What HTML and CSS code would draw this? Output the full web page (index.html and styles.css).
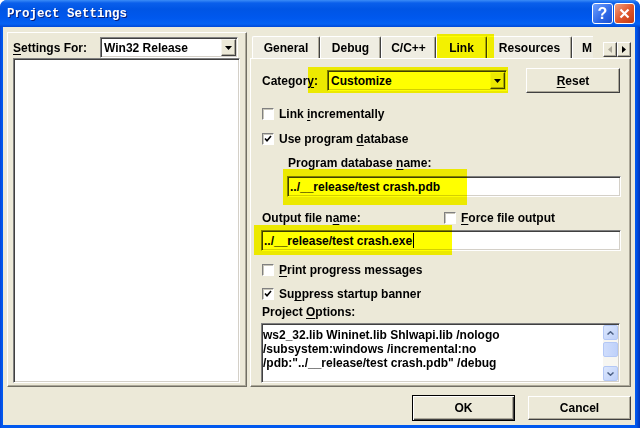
FILE: index.html
```html
<!DOCTYPE html>
<html lang="en">
<head>
    <meta charset="UTF-8">
    <title>Project Settings</title>
    <link rel="stylesheet" href="styles.css">
</head>
<body>

<div class="window">
    <div class="titlebar">
        <span class="title">Project Settings</span>
        <div class="caption-buttons">
            <span class="cap-btn help">?</span>
            <span class="cap-btn close">
                <svg width="11" height="11" viewBox="0 0 11 11"><path d="M1.5 1.5 L9.5 9.5 M9.5 1.5 L1.5 9.5" stroke="#fff" stroke-width="2.2"/></svg>
            </span>
        </div>
    </div>

    <div class="client">
        <div class="main">
            <!-- left pane: target tree -->
            <div class="left-pane">
                <div class="settings-for">
                    <span class="settings-label"><u>S</u>ettings For:</span>
                    <div class="combo target-combo">
                        <span class="combo-text">Win32 Release</span>
                        <span class="drop-btn"><svg width="7" height="4" viewBox="0 0 7 4"><polygon points="0,0 7,0 3.5,4" fill="#000"/></svg></span>
                    </div>
                </div>
                <div class="tree"></div>
            </div>

            <!-- right pane: tabs -->
            <div class="right-pane">
                <div class="tab-strip">
                    <div class="tabs">
                        <span class="tab tab-general">General</span>
                        <span class="tab tab-debug">Debug</span>
                        <span class="tab tab-cpp">C/C++</span>
                        <span class="tab tab-link active marked">Link</span>
                        <span class="tab tab-res">Resources</span>
                        <span class="tab tab-more">M</span>
                    </div>
                    <div class="tab-scroll">
                        <span class="scroll-btn"><svg width="4" height="7" viewBox="0 0 4 7"><polygon points="4,0 4,7 0,3.5" fill="#ACA899"/></svg></span>
                        <span class="scroll-btn"><svg width="4" height="7" viewBox="0 0 4 7"><polygon points="0,0 0,7 4,3.5" fill="#000"/></svg></span>
                    </div>
                </div>

                <div class="tab-page">
                    <div class="cat-row">
                        <span class="cat-label">Categor<u>y</u>:</span>
                        <div class="combo cat-combo marked">
                            <span class="combo-text">Customize</span>
                            <span class="drop-btn"><svg width="7" height="4" viewBox="0 0 7 4"><polygon points="0,0 7,0 3.5,4" fill="#000"/></svg></span>
                        </div>
                        <span class="btn reset-btn"><span><u>R</u>eset</span></span>
                    </div>

                    <div class="check-row row-incremental">
                        <span class="checkbox"></span>
                        <span>Link <u>i</u>ncrementally</span>
                    </div>
                    <div class="check-row row-pdb-use">
                        <span class="checkbox checked"><svg width="8" height="8" viewBox="0 0 8 8"><polyline points="1,3.5 3,5.8 7,1" fill="none" stroke="#000" stroke-width="1.6"/></svg></span>
                        <span>Use program <u>d</u>atabase</span>
                    </div>

                    <div class="field-label pdb-label">Program database <u>n</u>ame:</div>
                    <div class="edit pdb-field marked">../__release/test crash.pdb</div>

                    <div class="output-row">
                        <span class="output-label">Output file n<u>a</u>me:</span>
                        <span class="checkbox"></span>
                        <span><u>F</u>orce file output</span>
                    </div>
                    <div class="edit exe-field marked">../__release/test crash.exe<span class="caret"></span></div>

                    <div class="check-row row-print">
                        <span class="checkbox"></span>
                        <span><u>P</u>rint progress messages</span>
                    </div>
                    <div class="check-row row-suppress">
                        <span class="checkbox checked"><svg width="8" height="8" viewBox="0 0 8 8"><polyline points="1,3.5 3,5.8 7,1" fill="none" stroke="#000" stroke-width="1.6"/></svg></span>
                        <span>Su<u>p</u>press startup banner</span>
                    </div>

                    <div class="field-label options-label">Project <u>O</u>ptions:</div>
                    <div class="options-box">
                        <div class="options-text">ws2_32.lib Wininet.lib Shlwapi.lib /nologo
/subsystem:windows /incremental:no
/pdb:"../__release/test crash.pdb" /debug</div>
                        <div class="scrollbar">
                            <span class="sb-btn"><svg width="7" height="4" viewBox="0 0 7 4"><polyline points="0.5,3.5 3.5,0.8 6.5,3.5" fill="none" stroke="#4D6185" stroke-width="1.5"/></svg></span>
                            <span class="sb-thumb"></span>
                            <span class="sb-btn sb-down"><svg width="7" height="4" viewBox="0 0 7 4"><polyline points="0.5,0.5 3.5,3.2 6.5,0.5" fill="none" stroke="#4D6185" stroke-width="1.5"/></svg></span>
                        </div>
                    </div>
                </div>
            </div>
        </div>

        <div class="dialog-buttons">
            <span class="btn default">OK</span>
            <span class="btn cancel-btn">Cancel</span>
        </div>
    </div>
</div>

</body>
</html>
```

FILE: styles.css
```css
body {
    margin: 0;
    font-family: "Liberation Sans", Arial, sans-serif;
    font-weight: bold;
    font-size: 12px;
    color: #000;
    background: #fff;
}
u {
    text-decoration-thickness: 1px;
    text-underline-offset: 2px;
}

/* window frame */
.window {
    width: 640px;
    height: 428px;
    display: flex;
    flex-direction: column;
    background: linear-gradient(to right, #0842D6, #0058EE 2px, #0058EE 636px, #0034B8);
    border-radius: 7px 7px 0 0;
    overflow: hidden;
}
.titlebar {
    height: 27px;
    flex: none;
    display: flex;
    align-items: center;
    justify-content: space-between;
    padding: 0 5px 0 7px;
    background: linear-gradient(to bottom, #3B8CF7 0, #0A5FEB 3px, #0055E5 9px, #0058EE 18px, #0462F3 24px, #0048D6 27px);
}
.title {
    font-family: "Liberation Mono", monospace;
    font-size: 12.5px;
    color: #fff;
    text-shadow: 1px 1px #0A1E78;
}
.caption-buttons {
    display: flex;
    gap: 1px;
}
.cap-btn {
    width: 21px;
    height: 21px;
    box-sizing: border-box;
    border: 1px solid #fff;
    border-radius: 3px;
    display: flex;
    align-items: center;
    justify-content: center;
    color: #fff;
    font-family: "Liberation Sans", Arial, sans-serif;
    font-size: 16px;
}
.help {
    background: linear-gradient(135deg, #6FA0FF, #2E68E6 60%, #1B50D0);
}
.close {
    background: linear-gradient(135deg, #F0A080, #E0582E 50%, #C23A14);
}

.client {
    flex: 1;
    margin: 0 5px 3px 3px;
    background: #ECE9D8;
    display: flex;
    flex-direction: column;
}
.main {
    display: flex;
    gap: 3px;
    padding: 5px 4px 0 4px;
}

/* shared controls */
.combo {
    box-sizing: border-box;
    height: 21px;
    display: flex;
    align-items: center;
    background: #fff;
    border: 1px solid;
    border-color: #808080 #fff #fff #808080;
    box-shadow: inset 1px 1px #404040, inset -1px -1px #D4D0C8;
    padding: 1px;
}
.combo-text {
    flex: 1;
    padding-left: 2px;
}
.drop-btn {
    width: 15px;
    height: 17px;
    box-sizing: border-box;
    display: flex;
    align-items: center;
    justify-content: center;
    background: #ECE9D8;
    border: 1px solid;
    border-color: #F5F4EE #404040 #404040 #F5F4EE;
    box-shadow: inset -1px -1px #ACA899;
}
.btn {
    box-sizing: border-box;
    display: flex;
    align-items: center;
    justify-content: center;
    background: #ECE9D8;
    border: 1px solid;
    border-color: #fff #404040 #404040 #fff;
    box-shadow: inset -1px -1px #ACA899;
}
.edit {
    box-sizing: border-box;
    height: 21px;
    display: flex;
    align-items: center;
    background: #fff;
    border: 1px solid;
    border-color: #808080 #fff #fff #808080;
    box-shadow: inset 1px 1px #404040, inset -1px -1px #D4D0C8;
    padding-left: 2px;
    white-space: pre;
}
.checkbox {
    width: 12px;
    height: 12px;
    box-sizing: border-box;
    flex: none;
    margin-right: 5px;
    background: #fff;
    border: 1px solid;
    border-color: #808080 #fff #fff #808080;
    box-shadow: inset 1px 1px #C8C6BA;
    display: flex;
    align-items: center;
    justify-content: center;
}

/* yellow marker annotations */
.marked {
    position: relative;
}
.marked::after {
    content: "";
    position: absolute;
    background: #FFFF00;
    mix-blend-mode: multiply;
    pointer-events: none;
}

/* left pane */
.left-pane {
    box-sizing: border-box;
    width: 240px;
    height: 355px;
    display: flex;
    flex-direction: column;
    border: 1px solid;
    border-color: #fff #716F64 #716F64 #fff;
    box-shadow: inset -1px -1px #ACA899;
    padding: 4px 8px 3px 5px;
}
.settings-for {
    display: flex;
    align-items: center;
    justify-content: space-between;
}
.target-combo {
    width: 138px;
}
.tree {
    flex: 1;
    margin-right: -2px;
    background: #fff;
    border: 1px solid;
    border-color: #808080 #fff #fff #808080;
    box-shadow: inset 1px 1px #404040, inset -1px -1px #D4D0C8;
}

/* right pane */
.right-pane {
    width: 381px;
    display: flex;
    flex-direction: column;
}
.tab-strip {
    height: 26px;
    display: flex;
    align-items: flex-end;
    padding-left: 2px;
}
.tabs {
    width: 341px;
    height: 26px;
    display: flex;
    align-items: flex-end;
    overflow: hidden;
}
.tab {
    box-sizing: border-box;
    flex: none;
    height: 22px;
    display: flex;
    align-items: center;
    justify-content: center;
    background: #EFEDE2;
    border-top: 1px solid #fff;
    border-left: 1px solid #fff;
    border-right: 1px solid #404040;
    box-shadow: inset -1px 0 #ACA899;
    border-radius: 2px 2px 0 0;
}
.tab-general { width: 68px; }
.tab-debug { width: 61px; }
.tab-cpp { width: 55px; }
.tab-link { width: 51px; }
.tab-res { width: 85px; }
.tab-more { width: 40px; justify-content: flex-start; padding-left: 9px; }
.tab.active {
    background: #F3F1E8;
}
.tab.active::after {
    left: 0;
    right: -8px;
    top: -3px;
    bottom: 0;
}
.tab-scroll {
    display: flex;
    margin: 0 0 1px 10px;
}
.scroll-btn {
    width: 14px;
    height: 15px;
    box-sizing: border-box;
    display: flex;
    align-items: center;
    justify-content: center;
    background: #ECE9D8;
    border: 1px solid;
    border-color: #fff #404040 #404040 #fff;
    box-shadow: inset -1px -1px #ACA899;
}

.tab-page {
    box-sizing: border-box;
    height: 329px;
    display: flex;
    flex-direction: column;
    border: 1px solid;
    border-color: #fff #716F64 #716F64 #fff;
    box-shadow: inset -1px -1px #ACA899;
    padding: 9px 9px 0 11px;
}
.cat-row {
    height: 25px;
    display: flex;
    align-items: center;
}
.cat-label {
    flex: 0 0 65px;
}
.cat-combo {
    width: 180px;
}
.cat-combo::after {
    left: -20px;
    right: -2px;
    top: -4px;
    bottom: -3px;
}
.reset-btn {
    width: 94px;
    height: 25px;
    margin-left: 19px;
}
.check-row,
.output-row {
    height: 14px;
    line-height: 14px;
    display: flex;
    align-items: center;
}
.field-label {
    height: 14px;
    line-height: 14px;
}
.row-incremental { margin-top: 14px; }
.row-pdb-use { margin-top: 11px; }
.pdb-label { margin: 10px 0 0 26px; }
.pdb-field {
    margin: 6px 0 0 25px;
}
.pdb-field::after {
    left: -5px;
    top: -8px;
    width: 184px;
    height: 36px;
}
.output-row { margin-top: 14px; }
.output-label {
    flex: 0 0 182px;
}
.exe-field {
    margin: 5px 0 0 -1px;
}
.exe-field::after {
    left: -8px;
    top: -6px;
    width: 198px;
    height: 30px;
}
.caret {
    width: 1px;
    height: 15px;
    background: #000;
    margin-left: 1px;
}
.row-print { margin-top: 12px; }
.row-suppress { margin-top: 10px; }
.options-label { margin-top: 4px; }
.options-box {
    box-sizing: border-box;
    height: 60px;
    margin: 4px 1px 0 -1px;
    display: flex;
    background: #fff;
    border: 1px solid;
    border-color: #808080 #fff #fff #808080;
    box-shadow: inset 1px 1px #404040, inset -1px -1px #D4D0C8;
    padding: 1px;
}
.options-text {
    flex: 1;
    padding-top: 3px;
    line-height: 14px;
    white-space: pre;
    overflow: hidden;
}
.scrollbar {
    width: 15px;
    display: flex;
    flex-direction: column;
    gap: 2px;
    background: #F7F6F1;
}
.sb-btn,
.sb-thumb {
    width: 15px;
    height: 15px;
    box-sizing: border-box;
    display: flex;
    align-items: center;
    justify-content: center;
    background: linear-gradient(135deg, #DCE7FD, #BED0F9);
    border: 1px solid #B4C8F6;
    border-radius: 2px;
}
.sb-thumb {
    background: linear-gradient(to right, #CFDDFC, #BFD1FA);
}
.sb-down {
    margin-top: auto;
}

/* bottom buttons */
.dialog-buttons {
    display: flex;
    justify-content: flex-end;
    align-items: center;
    gap: 13px;
    height: 26px;
    margin-top: 8px;
    padding-right: 4px;
}
.dialog-buttons .btn {
    width: 103px;
}
.default {
    height: 26px;
    border: 1px solid #000;
    box-shadow: inset 1px 1px #fff, inset -1px -1px #404040, inset -2px -2px #ACA899;
}
.cancel-btn {
    height: 24px;
}
```
